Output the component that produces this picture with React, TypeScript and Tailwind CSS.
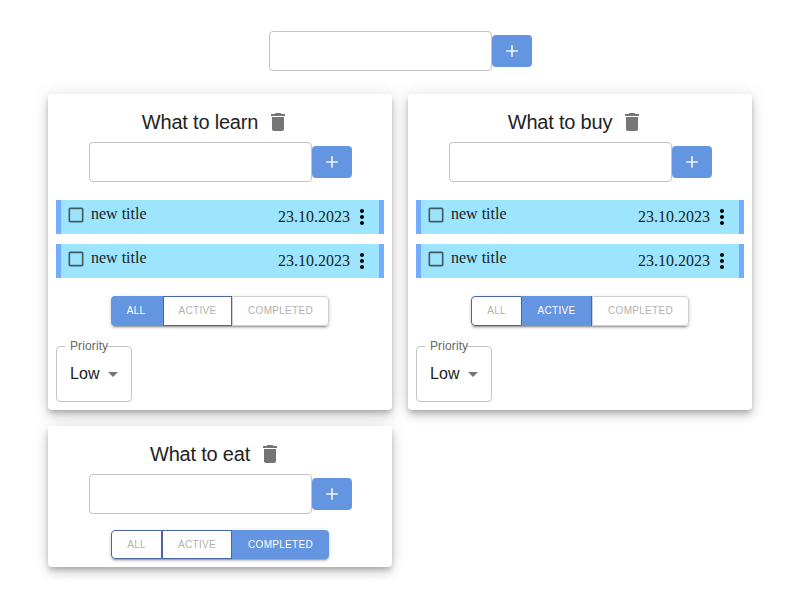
import React from "react";

type Filter = "all" | "active" | "completed";

const cardShadow =
  "shadow-[0px_3px_5px_-1px_rgba(0,0,0,0.2),0px_6px_10px_0px_rgba(0,0,0,0.14),0px_1px_18px_0px_rgba(0,0,0,0.12)]";
const groupShadow =
  "shadow-[0px_3px_1px_-2px_rgba(0,0,0,0.2),0px_2px_2px_0px_rgba(0,0,0,0.14),0px_1px_5px_0px_rgba(0,0,0,0.12)]";

function Icon({ d, className }: { d: string; className: string }) {
  return (
    <svg viewBox="0 0 24 24" fill="currentColor" className={"shrink-0 " + className}>
      <path d={d} />
    </svg>
  );
}

const trash = "M6 19c0 1.1.9 2 2 2h8c1.1 0 2-.9 2-2V7H6zM19 4h-3.5l-1-1h-5l-1 1H5v2h14z";
const plus = "M19 13h-6v6h-2v-6H5v-2h6V5h2v6h6z";
const box =
  "M19 5v14H5V5h14m0-2H5c-1.1 0-2 .9-2 2v14c0 1.1.9 2 2 2h14c1.1 0 2-.9 2-2V5c0-1.1-.9-2-2-2z";
const dots =
  "M12 8c1.1 0 2-.9 2-2s-.9-2-2-2-2 .9-2 2 .9 2 2 2zm0 2c-1.1 0-2 .9-2 2s.9 2 2 2 2-.9 2-2-.9-2-2-2zm0 6c-1.1 0-2 .9-2 2s.9 2 2 2 2-.9 2-2-.9-2-2-2z";

function AddForm() {
  return (
    <div className="flex items-center justify-center">
      <input className="h-10 w-[223px] rounded border border-[#c4c4c4] bg-white px-3.5 outline-none" />
      <button className="flex h-8 w-10 items-center justify-center rounded bg-[#6495e0] text-white/90">
        <Icon d={plus} className="size-5" />
      </button>
    </div>
  );
}

function TaskRow() {
  return (
    <div className="flex h-[34px] justify-between border-x-[5px] border-[#74adff] bg-[#9de5ff] pl-[5px] pr-[5px] font-['Liberation_Serif',serif] text-base text-[#1a2225]">
      <div className="flex">
        <Icon d={box} className="mt-[5px] size-5 text-[#3f5c66]" />
        <span className="ml-[5px] mt-0.5">new title</span>
      </div>
      <div className="flex pt-[5px]">
        <span>23.10.2023</span>
        <Icon d={dots} className="size-6 text-black" />
      </div>
    </div>
  );
}

const on = "bg-[#6495e0] text-white";
const off = "border text-[#b0b3ad]";
const blue = "border-[#48669f]";

function FilterGroup({ selected }: { selected: Filter }) {
  const height =
    selected === "completed" ? "h-[29px] *:pb-px" : "h-[30px] *:pb-0.5";
  return (
    <div
      className={`mx-auto flex w-[218px] rounded text-[10px] font-medium tracking-[0.02857em] *:uppercase ${height} ${groupShadow}`}
    >
      <button
        className={`rounded-l ${selected === "all" ? `w-[52px] pr-0.5 ${on}` : `w-[51px] ${off} ${blue}`}`}
      >
        All
      </button>
      <button
        className={
          selected === "active"
            ? `w-[70px] border-r ${blue} ${on}`
            : selected === "all"
              ? `w-[69px] ${off} ${blue}`
              : `w-[70px] ${off} ${blue}`
        }
      >
        Active
      </button>
      <button
        className={`w-[97px] rounded-r ${selected === "completed" ? on : `${off} border-[#d0d0d0]`}`}
      >
        Completed
      </button>
    </div>
  );
}

function PrioritySelect() {
  return (
    <div className="relative mt-5 flex h-14 w-[76px] items-center rounded border border-[#c4c4c4] pl-[13px]">
      <span className="absolute left-2 top-[-1px] h-px w-[42px] bg-white" />
      <span className="absolute left-[13px] top-[-9px] text-xs leading-4 tracking-[0.00938em] text-[#666]">
        Priority
      </span>
      <span className="text-base leading-6 tracking-[0.00938em] text-[#222]">Low</span>
      <Icon d="M7 10l5 5 5-5z" className="ml-px size-6 text-[#757575]" />
    </div>
  );
}

function Card({ title, tasks, selected }: { title: string; tasks: number; selected: Filter }) {
  return (
    <section
      className={`w-[344px] rounded bg-white p-2 ${tasks ? "h-[316px]" : "h-[141px]"} ${cardShadow}`}
    >
      <div className="flex h-10 items-center justify-center">
        <h3 className="text-xl leading-8 tracking-[-0.2px] text-[#222]">{title}</h3>
        <button className="p-2 text-[#757575]">
          <Icon d={trash} className="size-6" />
        </button>
      </div>
      <AddForm />
      {tasks > 0 && (
        <div className="mb-[18px] mt-[18px] flex flex-col gap-2.5">
          {Array.from({ length: tasks }, (_, i) => (
            <TaskRow key={i} />
          ))}
        </div>
      )}
      {tasks === 0 && <div className="h-4" />}
      <FilterGroup selected={selected} />
      {tasks > 0 && <PrioritySelect />}
    </section>
  );
}

export default function App() {
  return (
    <main className="h-[600px] w-[800px] overflow-hidden bg-white pt-[31px] font-['Liberation_Sans',Arial,sans-serif]">
      <AddForm />
      <div className="mt-[23px] flex flex-wrap items-start gap-4 px-12">
        <Card title="What to learn" tasks={2} selected="all" />
        <Card title="What to buy" tasks={2} selected="active" />
        <Card title="What to eat" tasks={0} selected="completed" />
      </div>
    </main>
  );
}
